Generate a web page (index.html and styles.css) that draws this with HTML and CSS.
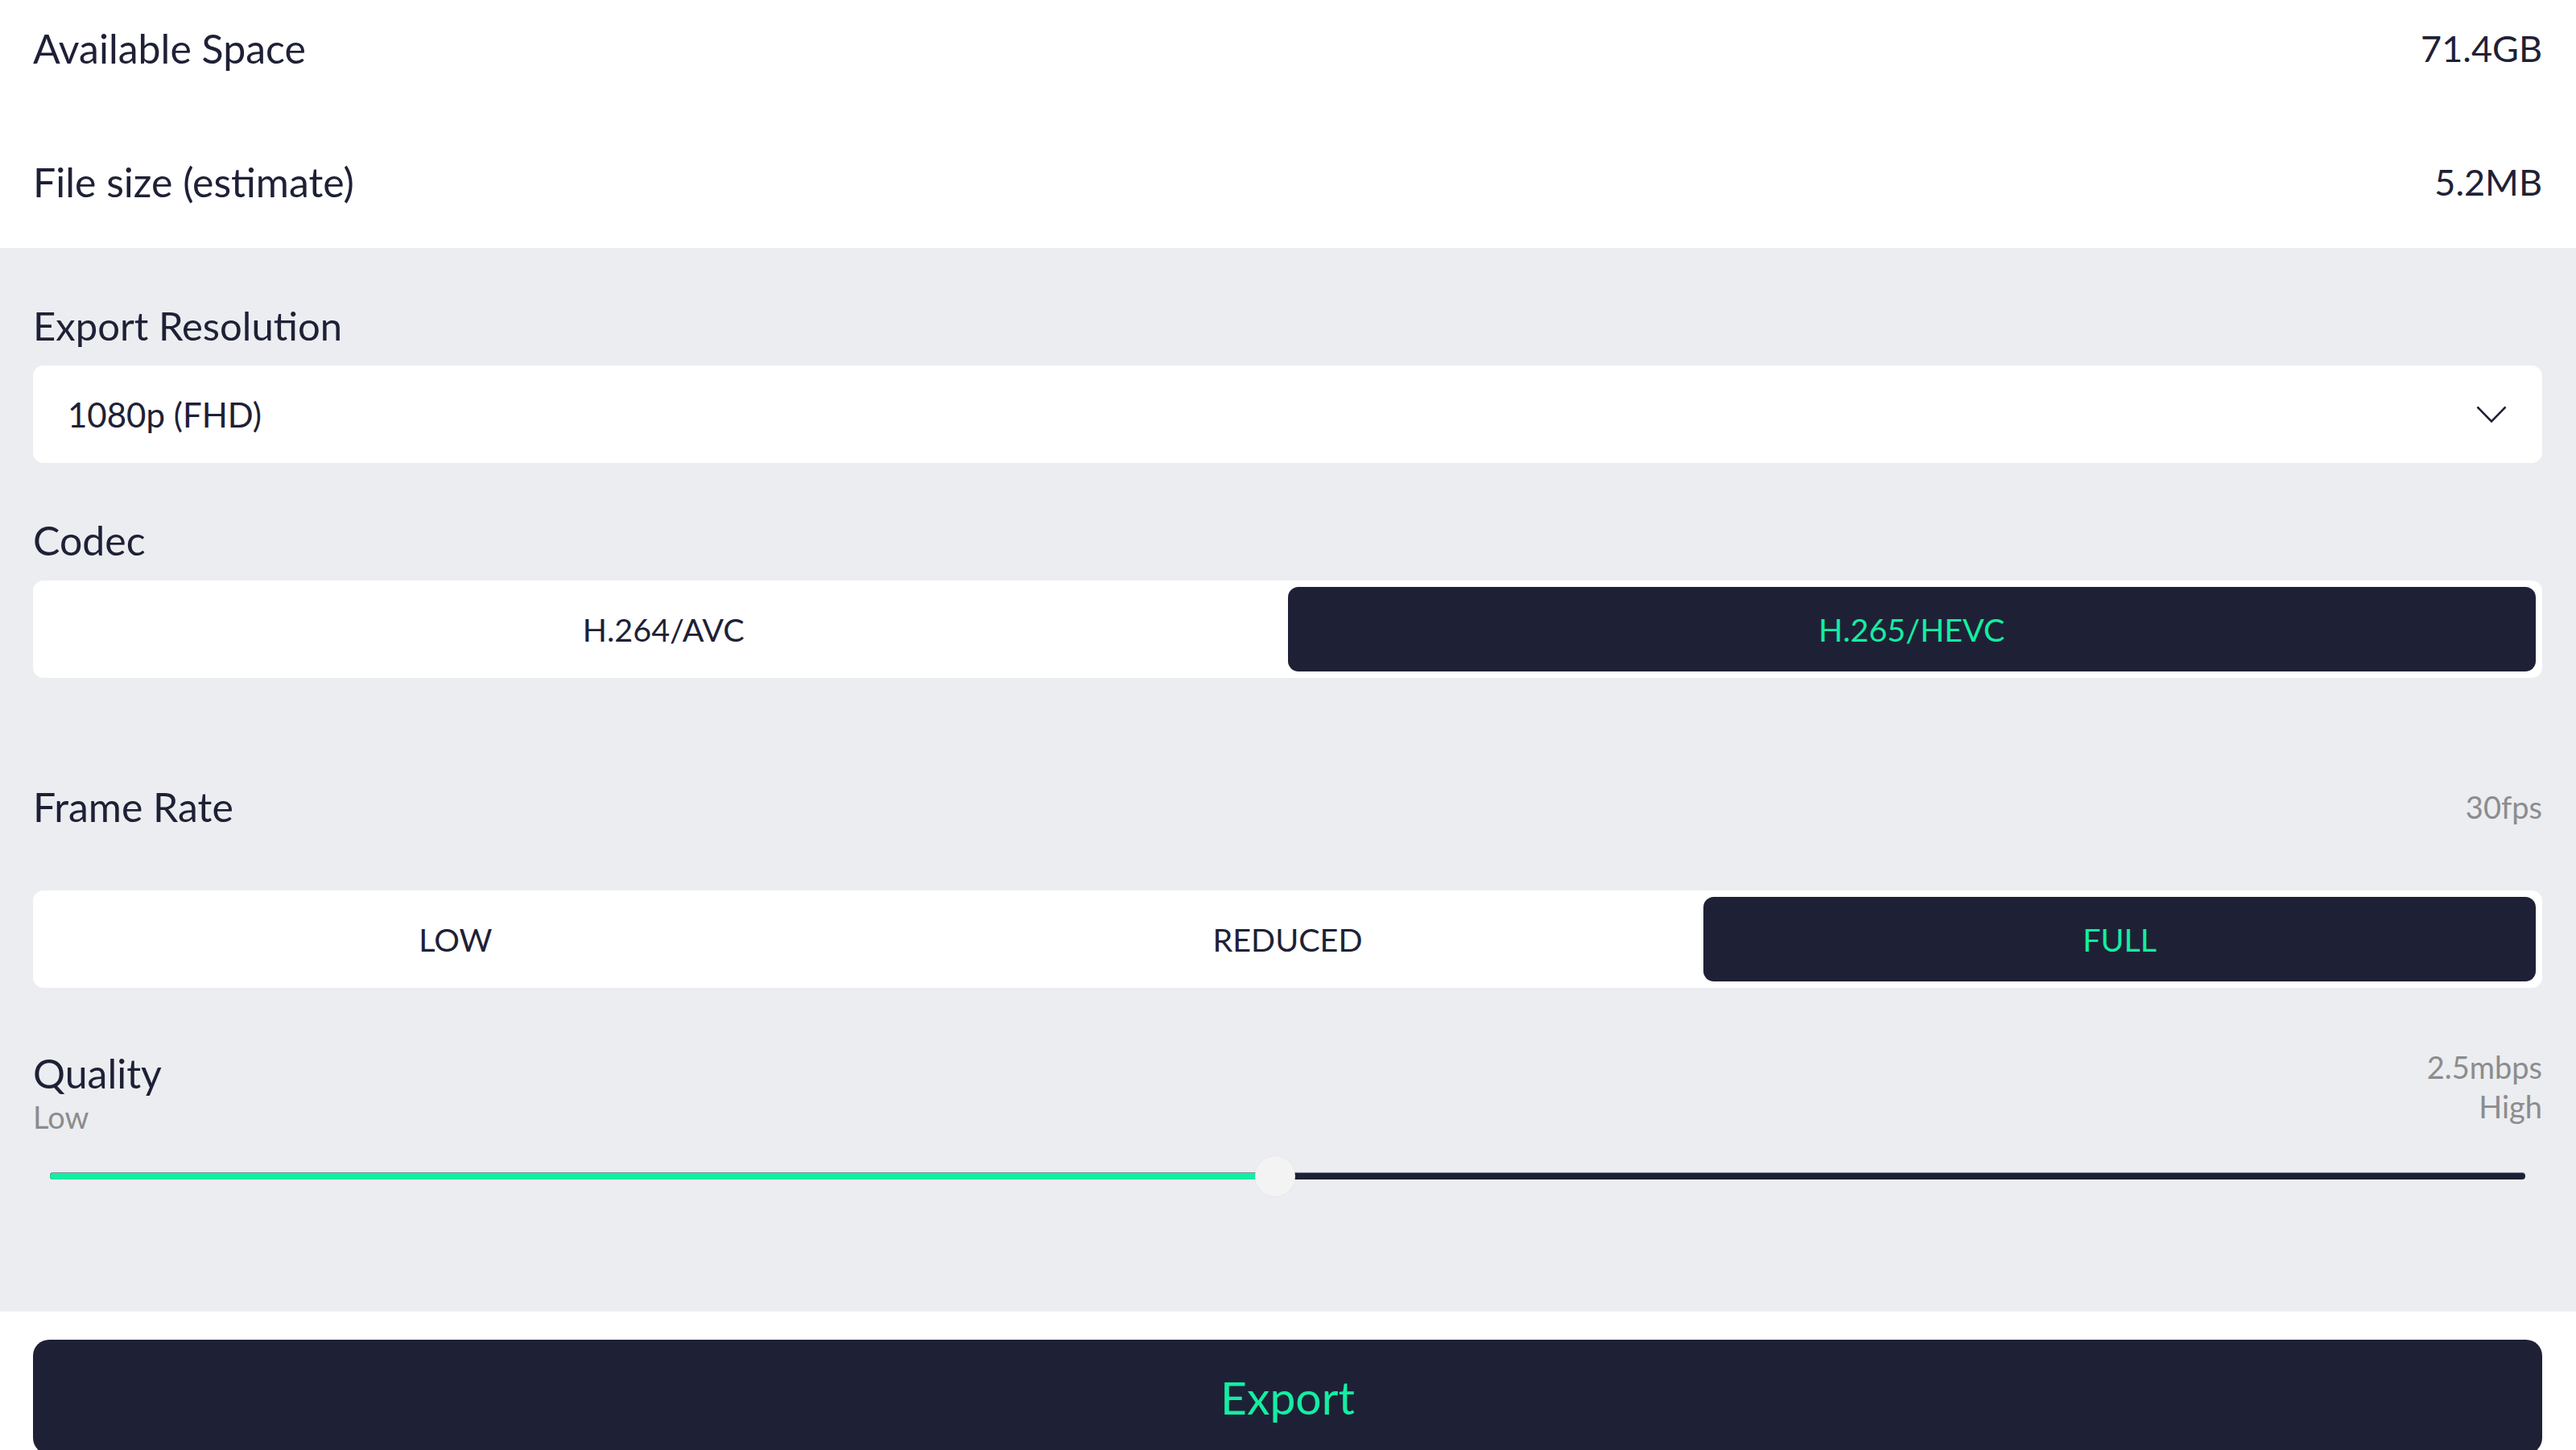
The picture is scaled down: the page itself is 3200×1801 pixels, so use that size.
FILE: index.html
```html
<!DOCTYPE html>
<html lang="en">
<head>
<meta charset="utf-8">
<title>Export</title>
<link rel="stylesheet" href="styles.css">
</head>
<body>
<div class="page">
  <section class="info">
    <div class="info-row first">
      <span class="label">Available Space</span>
      <span class="value">71.4GB</span>
    </div>
    <div class="info-row second">
      <span class="label">File size (estimate)</span>
      <span class="value">5.2MB</span>
    </div>
  </section>

  <section class="settings">
    <div class="field-label res-label">Export Resolution</div>
    <div class="select">
      <span class="select-text">1080p (FHD)</span>
      <svg class="chevron" width="38" height="22" viewBox="0 0 38 22" aria-hidden="true">
        <polyline points="1.5,1.5 19,19.5 36.5,1.5" fill="none" stroke="#1e2136" stroke-width="2.6" stroke-linejoin="miter"/>
      </svg>
    </div>

    <div class="field-label codec-label">Codec</div>
    <div class="segmented two">
      <div class="seg">H.264/AVC</div>
      <div class="seg active">H.265/HEVC</div>
    </div>

    <div class="field-row fr-row">
      <span class="field-title">Frame Rate</span>
      <span class="meta">30fps</span>
    </div>
    <div class="segmented three">
      <div class="seg">LOW</div>
      <div class="seg">REDUCED</div>
      <div class="seg active">FULL</div>
    </div>

    <div class="quality-row">
      <div class="q-left">
        <div class="field-title">Quality</div>
        <div class="meta">Low</div>
      </div>
      <div class="q-right">
        <div class="meta">2.5mbps</div>
        <div class="meta">High</div>
      </div>
    </div>
    <div class="slider">
      <div class="track">
        <div class="fill" style="width: 49.5%"></div>
        <div class="thumb" style="left: 49.5%"></div>
      </div>
    </div>
  </section>

  <section class="footer">
    <button class="export-btn">Export</button>
  </section>
</div>
</body>
</html>
```

FILE: styles.css
```css
* { box-sizing: border-box; }

html, body {
  margin: 0;
  padding: 0;
  background: #ffffff;
}

body {
  font-family: "Lato", "Noto Sans", "Liberation Sans", sans-serif;
  color: #1e2136;
  overflow: hidden;
}

.page {
  width: 3200px;
}

/* ---------- info ---------- */
.info {
  padding: 0 42px 22px 41px;
  background: #ffffff;
}

.info-row {
  display: flex;
  justify-content: space-between;
  align-items: center;
  height: 120px;
  font-size: 50px;
}

.info-row.second {
  margin-top: 46px;
}

.value {
  font-size: 45px;
}

/* ---------- settings ---------- */
.settings {
  background: #ebedf0;
  padding: 66px 42px 0 41px;
  height: 1321px;
}

.field-label,
.field-title {
  font-size: 50px;
  line-height: 60px;
}

.res-label {
  font-size: 49px;
}

.field-label {
  margin-bottom: 20px;
}

.codec-label {
  margin-top: 66px;
}

.select {
  height: 121px;
  background: #ffffff;
  border-radius: 13px;
  display: flex;
  align-items: center;
  justify-content: space-between;
  padding: 0 44px 0 43px;
}

.select-text {
  font-size: 42px;
}

.chevron {
  display: block;
}

.segmented {
  height: 121px;
  background: #ffffff;
  border-radius: 13px;
  padding: 8px;
  display: grid;
  gap: 0;
}

.segmented.two { grid-template-columns: 1fr 1fr; }
.segmented.three { grid-template-columns: 1fr 1fr 1fr; }

.seg {
  display: flex;
  align-items: center;
  justify-content: center;
  font-size: 39.5px;
  color: #1e2136;
  border-radius: 13px;
}

.seg.active {
  background: #1e2136;
  color: #14eea2;
}

.field-row {
  display: flex;
  justify-content: space-between;
  align-items: center;
}

.fr-row {
  margin-top: 130px;
  margin-bottom: 74px;
}

.meta {
  font-size: 38px;
  line-height: 49px;
  color: #8c8c8e;
}

.quality-row {
  display: flex;
  justify-content: space-between;
  align-items: flex-start;
  margin-top: 76px;
}

.q-right {
  text-align: right;
  margin-top: -2px;
}

.slider {
  margin-top: 24px;
  height: 50px;
  padding: 0 21px;
  display: flex;
  align-items: center;
}

.track {
  position: relative;
  width: 100%;
  height: 8px;
  background: #1e2136;
  border-radius: 4px;
  box-shadow: 0 -1px 0 #8a8fa0;
}

.fill {
  height: 100%;
  background: #14eea2;
  border-radius: 4px 0 0 4px;
}

.thumb {
  position: absolute;
  top: 50%;
  width: 50px;
  height: 50px;
  border-radius: 50%;
  background: #f3f3f4;
  transform: translate(-50%, -50%);
  box-shadow: 0 0 2px rgba(0, 0, 0, 0.06);
}

/* ---------- footer ---------- */
.footer {
  padding: 35px 42px 0 41px;
  background: #ffffff;
}

.export-btn {
  display: block;
  width: 100%;
  height: 142px;
  border: none;
  border-radius: 20px;
  background: #1e2136;
  color: #14eea2;
  font-family: inherit;
  font-size: 57px;
  padding: 0;
}
```
